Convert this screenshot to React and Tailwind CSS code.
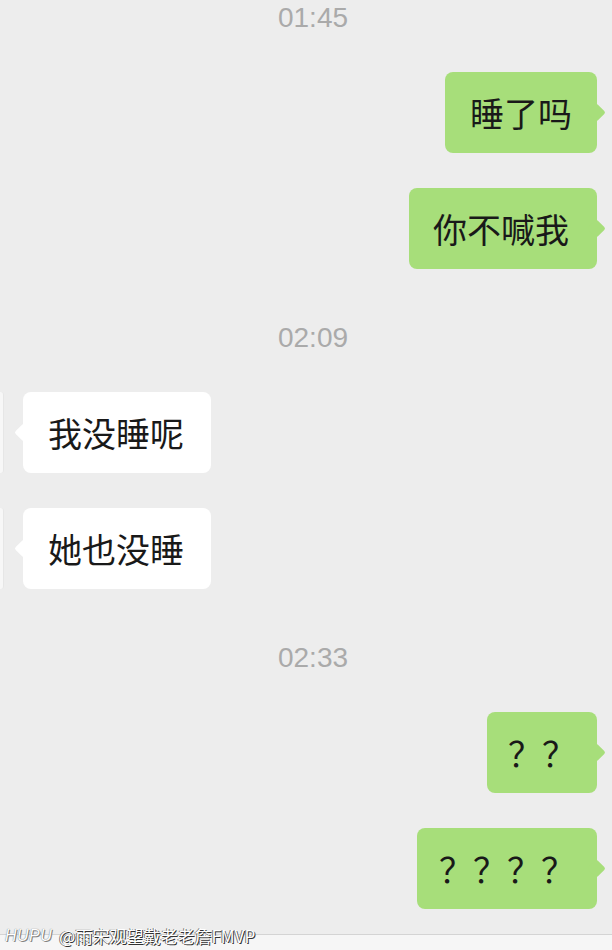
import React from "react";

const cjk = { fontFamily: '"Noto Sans CJK SC", "Noto Sans", sans-serif' };
const latin = { fontFamily: '"Liberation Sans", Arial, sans-serif' };

function Time({ children, first }) {
  return (
    <div
      className={`h-[36px] flex items-center justify-center pl-[14px] text-[28px] text-[#aaaaaa] ${first ? "" : "mt-[51px]"}`}
      style={latin}
    >
      {children}
    </div>
  );
}

function Right({ children, mt, px = "px-[25px]" }) {
  return (
    <div className={`flex justify-end pr-[15px] ${mt}`}>
      <div className={`relative h-[81px] bg-[#a7de7a] rounded-[8px] ${px} flex items-center`}>
        <div className="absolute right-[-6px] top-[34px] w-[13px] h-[13px] bg-[#a7de7a] rotate-45 rounded-[2px]" />
        <span className="relative text-[34px] text-[#191919] leading-none" style={cjk}>
          {children}
        </span>
      </div>
    </div>
  );
}

function Left({ children, mt }) {
  return (
    <div className={`flex items-start ${mt}`}>
      <div className="w-[4px] h-[81px] bg-[#f7f7f7] rounded-r-[3px] border-r border-[#e6e6e6]" />
      <div className="relative ml-[19px] h-[81px] bg-white rounded-[8px] pl-[25px] pr-[27px] flex items-center">
        <div className="absolute left-[-6px] top-[34px] w-[13px] h-[13px] bg-white rotate-45 rounded-[2px]" />
        <span className="relative text-[34px] text-[#191919] leading-none" style={cjk}>
          {children}
        </span>
      </div>
    </div>
  );
}

export default function App() {
  return (
    <div className="relative w-[612px] h-[950px] bg-[#ededed] overflow-hidden flex flex-col">
      <Time first>01:45</Time>
      <Right mt="mt-[36px]">睡了吗</Right>
      <Right mt="mt-[35px]" px="pl-[24px] pr-[28px]">你不喊我</Right>
      <Time>02:09</Time>
      <Left mt="mt-[36px]">我没睡呢</Left>
      <Left mt="mt-[35px]">她也没睡</Left>
      <Time>02:33</Time>
      <Right mt="mt-[36px]" px="px-[21px]">？？</Right>
      <Right mt="mt-[35px]" px="px-[22px]">？？？？</Right>
      <div className="mt-[25px] flex-1 border-t border-[#d4d4d4] bg-[#f6f6f6]" />
      <div
        className="absolute left-[5px] top-[927px] flex items-center gap-[7px] text-white text-[17px] leading-none"
        style={{ textShadow: "1px 1px 0 #333, -1px 0 0 #777" }}
      >
        <span className="italic text-[16px] tracking-[0.5px]" style={{ ...latin, textShadow: "0 0 1px #555, 1px 1px 0 #888" }}>
          HUPU
        </span>
        <span style={cjk}>@雨宋观望戴老老詹FMVP</span>
      </div>
    </div>
  );
}
